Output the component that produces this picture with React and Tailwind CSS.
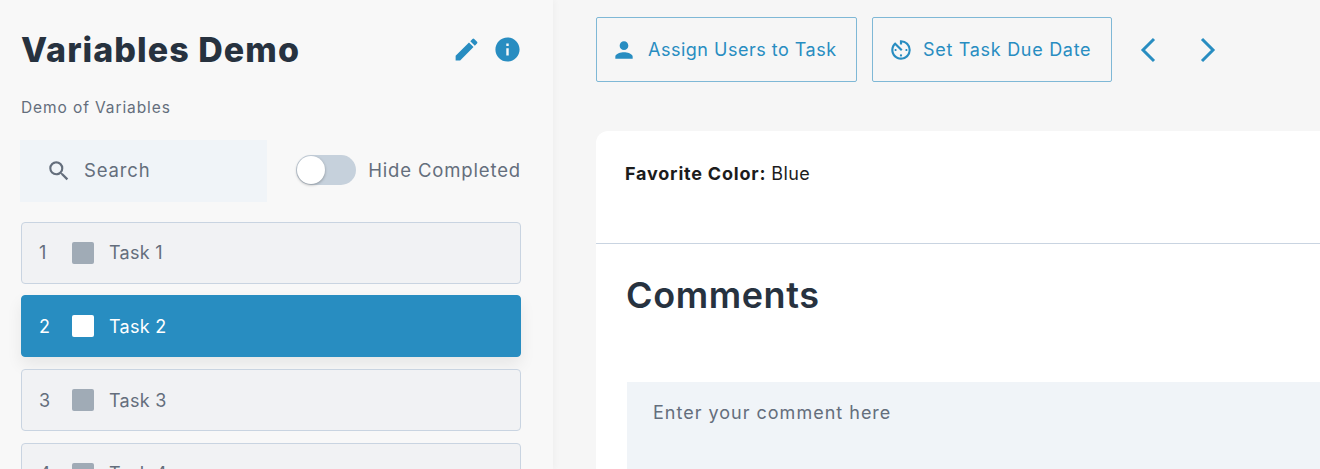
import React from 'react';
import { MdEdit, MdInfo, MdSearch, MdPerson, MdAvTimer } from 'react-icons/md';

const tasks = [
  { id: 1, name: 'Task 1' },
  { id: 2, name: 'Task 2', active: true },
  { id: 3, name: 'Task 3' },
  { id: 4, name: 'Task 4' },
];

function TaskRow({ id, name, active }) {
  const rowClass = active
    ? 'bg-[#288dc1] border-[#288dc1] text-white shadow-[0_8px_16px_rgba(0,0,0,0.07)]'
    : 'bg-[#f1f2f4] border-[#c9d4e1] text-[#646e7c]';
  return (
    <div className={`flex items-center h-[62px] shrink-0 rounded border pl-[17px] text-[18px] tracking-[0.3px] ${rowClass}`}>
      <span className="w-[33px]">{id}</span>
      <span className={`w-[22px] h-[22px] rounded-[2px] mr-[15px] ${active ? 'bg-white' : 'bg-[#a0abb6]'}`} />
      <span>{name}</span>
    </div>
  );
}

function ActionButton({ icon, label, className }) {
  return (
    <button className={`flex items-center h-[65px] rounded-[2px] border border-[#7fb8d6] text-[#288dc1] text-[18px] ${className}`}>
      {icon}
      <span>{label}</span>
    </button>
  );
}

export default function App() {
  return (
    <div className="flex h-[469px] w-[1320px] overflow-hidden bg-[#f6f6f6] font-['Inter','Liberation_Sans',sans-serif]">
      <aside className="w-[553px] shrink-0 bg-[#f8f8f8] pl-[21px] pr-[32px] shadow-[2px_0_6px_rgba(0,0,0,0.03)] flex flex-col">
        <div className="flex items-center justify-between h-[34px] mt-[32px]">
          <h1 className="text-[34px] font-extrabold text-[#27323f] tracking-[1.05px] whitespace-nowrap">Variables Demo</h1>
          <div className="flex items-center gap-[12px] text-[#288dc1] mr-[-1px]">
            <MdEdit size={29} />
            <MdInfo size={29} />
          </div>
        </div>
        <p className="mt-[32px] text-[15.5px] leading-[20px] tracking-[0.9px] text-[#646e7c]">Demo of Variables</p>
        <div className="flex items-center mt-[22px] ml-[-1px]">
          <div className="flex items-center w-[248px] h-[62px] bg-[#f0f4f8] pl-[26px] text-[18.5px] tracking-[0.85px] text-[#646e7c]">
            <MdSearch size={26} />
            <span className="ml-[12px]">Search</span>
          </div>
          <div className="relative w-[60px] h-[30px] ml-[28.5px] mb-[2px] rounded-full bg-[#c6d1dc]">
            <span className="absolute left-px top-px w-[28px] h-[28px] rounded-full bg-white shadow-[0_1px_3px_rgba(0,0,0,0.3)]" />
          </div>
          <span className="ml-[12.5px] mb-[1px] text-[18.5px] tracking-[0.85px] text-[#646e7c] whitespace-nowrap">Hide Completed</span>
        </div>
        <div className="flex flex-col gap-[11.8px] mt-[19.6px]">
          {tasks.map((t) => (
            <TaskRow key={t.id} {...t} />
          ))}
        </div>
      </aside>

      <main className="flex-1 pl-[43px] flex flex-col min-w-0">
        <div className="flex items-center gap-[15px] mt-[17px]">
          <ActionButton
            icon={<MdPerson size={26} className="mr-[11px]" />}
            label="Assign Users to Task"
            className="w-[261px] pl-[14px] tracking-[0.5px]"
          />
          <ActionButton
            icon={<MdAvTimer size={26} className="mr-[9px]" />}
            label="Set Task Due Date"
            className="w-[240px] pl-[15px] tracking-[0.7px]"
          />
          <div className="flex items-center gap-[28px] ml-[5px] text-[#288dc1]">
            <svg width="32" height="32" viewBox="0 0 32 32" fill="none" stroke="currentColor" strokeWidth="3">
              <path d="M22 5 11 16l11 11" />
            </svg>
            <svg width="32" height="32" viewBox="0 0 32 32" fill="none" stroke="currentColor" strokeWidth="3">
              <path d="m10 5 11 11-11 11" />
            </svg>
          </div>
        </div>
        <section className="mt-[49px] flex-1 bg-white rounded-tl-[12px]">
          <div className="h-[113px] border-b border-[#c9d4e1] pl-[29px] pt-[31px] text-[18px] leading-[24px] text-[#1c1c1c]">
            <b className="font-bold tracking-[0.8px]">Favorite Color:</b> <span className="tracking-[0.4px]">Blue</span>
          </div>
          <h2 className="ml-[30px] mt-[31px] text-[36px] leading-[40px] tracking-[0.6px] font-semibold text-[#27323f]">Comments</h2>
          <div className="ml-[31px] mt-[67px] h-[100px] bg-[#f0f4f8] pl-[26px] pt-[19px] text-[18px] leading-[24px] tracking-[1px] text-[#646e7c]">
            Enter your comment here
          </div>
        </section>
      </main>
    </div>
  );
}
